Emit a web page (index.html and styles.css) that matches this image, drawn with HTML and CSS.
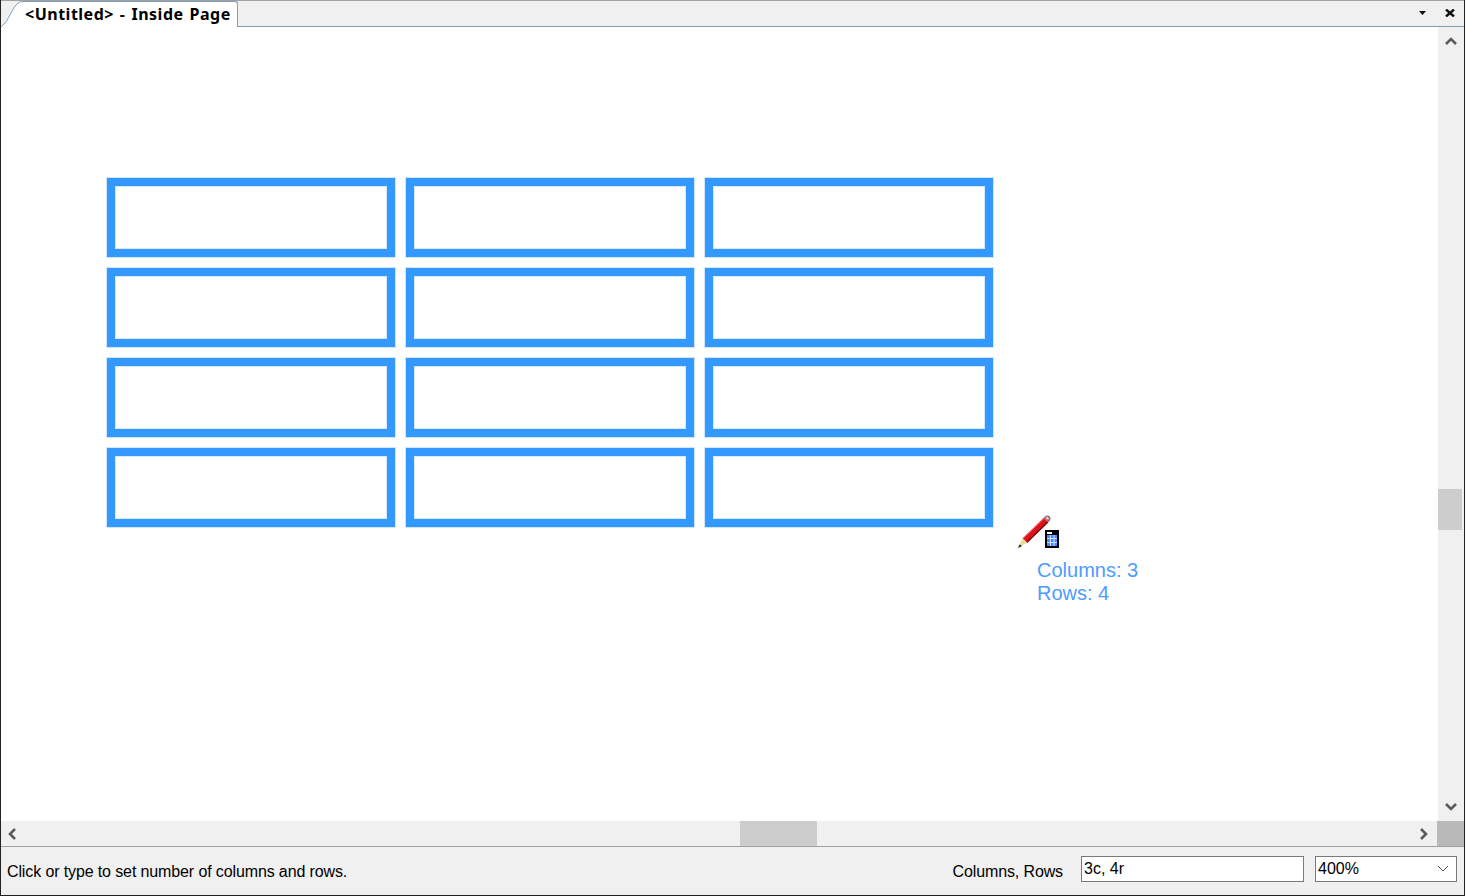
FILE: index.html
```html
<!DOCTYPE html>
<html lang="en">
<head>
  <meta charset="UTF-8">
  <title>Inside Page</title>
  <link rel="stylesheet" href="styles.css">
</head>
<body>
  <div class="window">
    <div class="tabbar">
      <div class="tab">
        <svg class="tab-slant" width="24" height="27" viewBox="0 0 24 27">
          <path d="M0.5 26.500 L2 25 C8 20 11 8 17 3 Q19 1.500 23 1.500 L24 1.500 L24 27 L0.500 27 Z" fill="#fff"/>
          <path d="M1 26 L2 25 C8 20 11 8 17 3 Q19 1.500 23 1.500 L24 1.500" fill="none" stroke="#7f9db9"/>
        </svg>
        <span class="tab-label">&lt;Untitled&gt; - Inside Page</span>
      </div>
      <div class="tab-tools">
        <svg width="7" height="4" viewBox="0 0 7 4"><path d="M0 0H7L3.500 4Z" fill="#111"/></svg>
        <svg width="10" height="8" viewBox="0 0 10 8"><path d="M1 0.500L9 7.500M9 0.500L1 7.500" stroke="#111" stroke-width="2.400" fill="none"/></svg>
      </div>
    </div>

    <div class="workspace">
      <div class="canvas">
        <div class="table-grid">
          <div class="cell"></div><div class="cell"></div><div class="cell"></div>
          <div class="cell"></div><div class="cell"></div><div class="cell"></div>
          <div class="cell"></div><div class="cell"></div><div class="cell"></div>
          <div class="cell"></div><div class="cell"></div><div class="cell"></div>
        </div>

        <!-- cursor and its readout float over the page -->
        <svg class="cursor" width="44" height="34" viewBox="0 0 44 34">
          <path d="M1 33 L5.700 23.200 L10.300 27.800 Z" fill="#e6dc9c"/>
          <path d="M1 33 L2.800 29.200 L4.800 31.200 Z" fill="#222"/>
          <path d="M5.700 23.200 L26.700 2.700 L31.300 7.300 L10.300 27.800 Z" fill="#e01018"/>
          <path d="M6.500 23 L27 3.500" stroke="#f4707a" stroke-width="1" fill="none"/>
          <path d="M10 27.300 L30.800 7" stroke="#6e0a10" stroke-width="1.400" fill="none"/>
          <path d="M26.700 2.700 L29 0.800 Q31.500 0 33 1.800 Q34.200 3.800 33 5.500 L31.300 7.300 Z" fill="#9c6a72"/>
          <path d="M28.500 2.800 L30.300 1.800 L32 3.500 L31 5 Z" fill="#ecd8d8"/>
          <rect x="28" y="15" width="14" height="18" fill="#000"/>
          <rect x="30" y="17" width="5" height="2" fill="#fff"/>
          <rect x="30" y="20" width="10" height="11" fill="#4488ff"/>
          <path d="M30 23.500H40M30 27.500H40M33.500 20V31M37 20V31" stroke="#cfe0ff" stroke-width="1"/>
        </svg>
        <div class="readout">Columns: 3<br>Rows: 4</div>
      </div>

      <div class="vscroll">
        <button class="arrow">
          <svg width="12" height="10" viewBox="0 0 12 10"><path d="M1 8L6 3L11 8" fill="none" stroke="#5a5a5a" stroke-width="2.600"/></svg>
        </button>
        <div class="vtrack"><div class="vthumb"></div></div>
        <button class="arrow">
          <svg width="12" height="10" viewBox="0 0 12 10"><path d="M1 2L6 7L11 2" fill="none" stroke="#5a5a5a" stroke-width="2.600"/></svg>
        </button>
      </div>

      <div class="hscroll">
        <button class="arrow">
          <svg width="10" height="12" viewBox="0 0 10 12"><path d="M8 1L3 6L8 11" fill="none" stroke="#5a5a5a" stroke-width="2.600"/></svg>
        </button>
        <div class="htrack"><div class="hthumb"></div></div>
        <button class="arrow arrow-end">
          <svg width="10" height="12" viewBox="0 0 10 12"><path d="M2 1L7 6L2 11" fill="none" stroke="#5a5a5a" stroke-width="2.600"/></svg>
        </button>
      </div>
      <div class="corner"></div>
    </div>

    <div class="statusbar">
      <span class="hint">Click or type to set number of columns and rows.</span>
      <span class="field-label">Columns, Rows</span>
      <div class="field size-field">3c, 4r</div>
      <div class="field zoom-field">
        <span>400%</span>
        <svg width="12" height="7" viewBox="0 0 12 7"><path d="M1 1L6 6L11 1" fill="none" stroke="#555" stroke-width="1"/></svg>
      </div>
    </div>
  </div>
</body>
</html>
```

FILE: styles.css
```css
* {
  margin: 0;
  padding: 0;
  box-sizing: border-box;
}

html, body {
  height: 100%;
  overflow: hidden;
}

body {
  font-family: "Liberation Sans", Arial, sans-serif;
  background: #fff;
  color: #000;
}

.window {
  width: 1465px;
  height: 896px;
  display: flex;
  flex-direction: column;
  border-left: 1px solid #222;
  border-right: 1px solid #222;
  border-bottom: 1px solid #222;
  background: #f0f0f0;
}

.tabbar {
  height: 27px;
  display: flex;
  justify-content: space-between;
  background: #f0f0f0;
  border-top: 1px solid #a0a0a0;
  border-bottom: 1px solid #7f9db9;
}

.tab {
  display: flex;
  height: 26px;
  margin-bottom: -1px;
}

.tab-slant {
  display: block;
  flex: none;
  margin-top: -1px;
}

.tab-label {
  background: #fff;
  border-top: 1px solid #7f9db9;
  border-right: 1px solid #7f9db9;
  border-top-right-radius: 3px;
  padding: 1px 6px 0 0;
  height: 26px;
  font-family: "Noto Sans", sans-serif;
  font-weight: 700;
  font-size: 16px;
  letter-spacing: 0.5px;
  word-spacing: 1.300px;
  line-height: 22px;
  white-space: pre;
}

.tab-tools {
  display: flex;
  align-items: center;
  gap: 19px;
  padding: 0 9px 2px 0;
}

.workspace {
  flex: 1;
  display: grid;
  grid-template-columns: 1436px 27px;
  grid-template-rows: 794px 25px;
}

.canvas {
  position: relative;
  grid-column: 1 / 3;
  grid-row: 1;
  background: #fff;
  padding: 151px 0 0 106px;
  overflow: hidden;
}

.table-grid {
  display: grid;
  grid-template-columns: repeat(3, 288px);
  grid-auto-rows: 79px;
  gap: 11px;
}

/* bitmap was scaled up in the app so the edges are a bit soft */
.cell {
  border: 8px solid #3399ff;
  outline: 1px solid #cfe6ff;
  box-shadow: inset 0 0 0 1px #d6eaff;
}

.cursor {
  position: absolute;
  left: 1016px;
  top: 488px;
}

.readout {
  position: absolute;
  left: 1036px;
  top: 532px;
  font-size: 20px;
  line-height: 23px;
  color: #4f9bff;
}

.vscroll {
  grid-column: 2;
  grid-row: 1;
  justify-self: end;
  width: 26px;
  z-index: 1;
  display: flex;
  flex-direction: column;
  background: #f0f0f0;
}

.arrow {
  flex: none;
  border: none;
  background: none;
  display: flex;
  align-items: center;
  justify-content: center;
}

.vscroll .arrow {
  height: 28px;
  width: 25px;
}

.vtrack {
  flex: 1;
}

.vthumb {
  width: 24px;
  height: 41px;
  margin-top: 434px;
  background: #cdcdcd;
}

.hscroll {
  grid-column: 1;
  grid-row: 2;
  display: flex;
  background: #f0f0f0;
}

.hscroll .arrow {
  width: 22px;
}

.hscroll .arrow-end {
  width: 27px;
}

.htrack {
  flex: 1;
}

.hthumb {
  width: 77px;
  height: 100%;
  margin-left: 717px;
  background: #cdcdcd;
}

.corner {
  grid-column: 2;
  grid-row: 2;
  background: #b9b9b9;
}

.statusbar {
  flex: 1;
  display: flex;
  align-items: center;
  border-top: 1px solid #a0a0a0;
  padding: 0 7px 0 6px;
  font-size: 16px;
  background: #f0f0f0;
}

.hint {
  flex: 1;
  letter-spacing: -0.12px;
  margin-top: 2px;
}

.field-label {
  margin-right: 18px;
  letter-spacing: -0.12px;
  margin-top: 2px;
}

.field {
  height: 26px;
  background: #fff;
  border: 1px solid #7a7a7a;
  line-height: 24px;
  padding-left: 2px;
  margin-top: -5px;
}

.size-field {
  width: 223px;
  margin-right: 11px;
}

.zoom-field {
  width: 142px;
  display: flex;
  align-items: center;
  justify-content: space-between;
  padding-right: 7px;
}
```
